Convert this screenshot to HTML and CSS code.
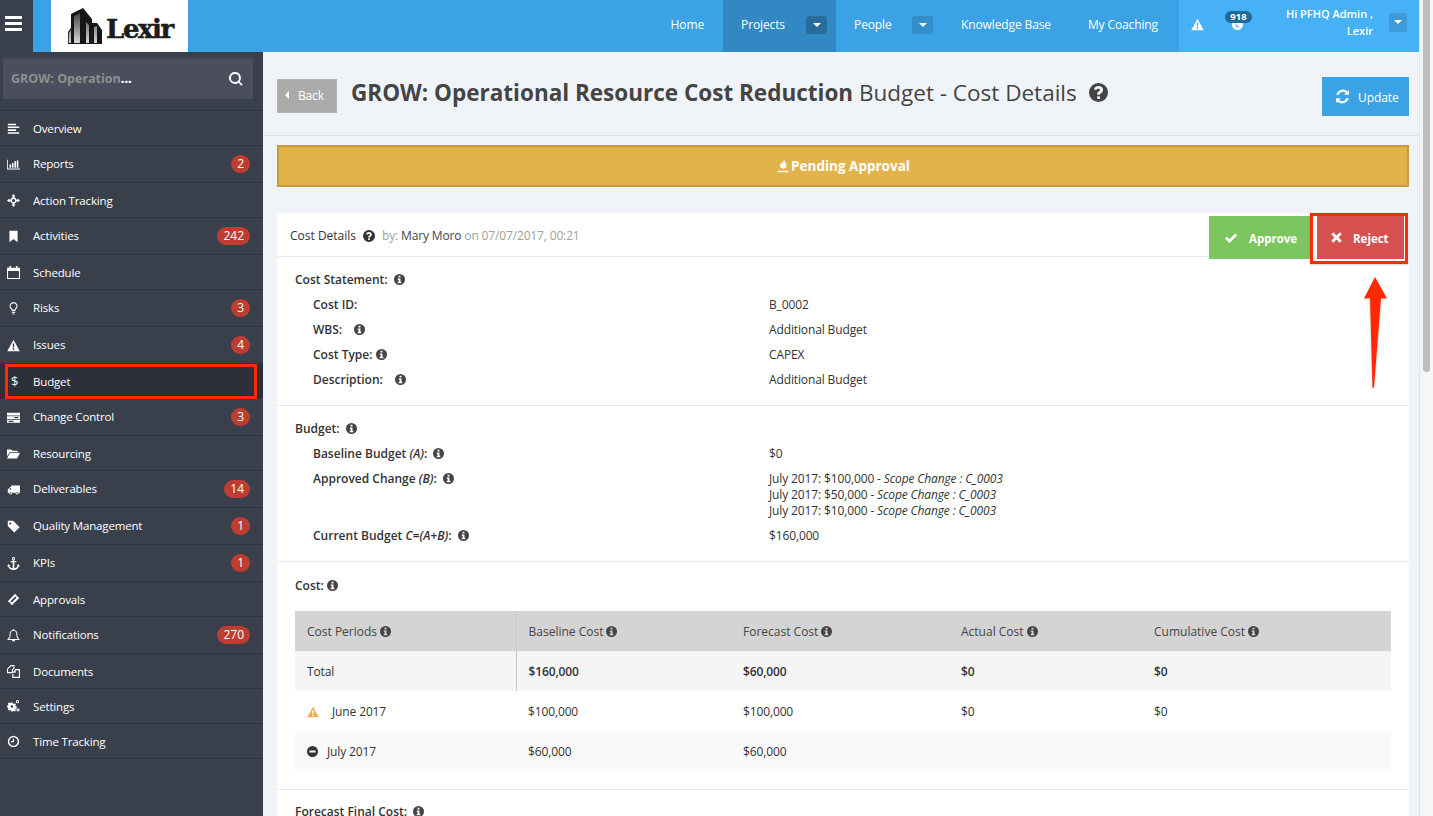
FILE: index.html
```html
<!DOCTYPE html>
<html lang="en">
<head>
<meta charset="utf-8">
<title>Lexir - Budget Cost Details</title>
<link rel="stylesheet" href="styles.css">
</head>
<body>
<svg class="sprite" aria-hidden="true">
  <symbol id="i-overview" viewBox="0 0 16 16"><path d="M1 2h10v2H1zM1 5.500h14v2H1zM1 9h10v2H1zM1 12.500h14v2H1z"/></symbol>
  <symbol id="i-chart" viewBox="0 0 16 16"><path d="M0 2h1v11h15v1H0zM3 8h2v4H3zM6 6h2v6H6zM9 4h2v8H9zM12 3h2v9h-2z"/></symbol>
  <symbol id="i-arrows" viewBox="0 0 16 16"><path fill-rule="evenodd" d="M8 0l2.500 3H9v1.200A4 4 0 0 1 11.800 7H13V5.500l3 2.500-3 2.500V9h-1.200A4 4 0 0 1 9 11.800V13h1.500L8 16l-2.500-3H7v-1.200A4 4 0 0 1 4.200 9H3v1.500L0 8l3-2.500V7h1.200A4 4 0 0 1 7 4.200V3H5.500zM8 6a2 2 0 1 0 0 4 2 2 0 0 0 0-4z"/></symbol>
  <symbol id="i-bookmark" viewBox="0 0 16 16"><path d="M3 1h10v14l-5-4-5 4z"/></symbol>
  <symbol id="i-calendar" viewBox="0 0 16 16"><path fill-rule="evenodd" d="M3 0h2v2h6V0h2v2h3v14H0V2h3zM1.300 6v8.700h13.400V6z"/></symbol>
  <symbol id="i-bulb" viewBox="0 0 16 16"><path fill-rule="evenodd" d="M8 0a5 5 0 0 1 3.200 8.800c-.6.600-1 1.400-1.200 2.200H6c-.2-.8-.6-1.600-1.200-2.200A5 5 0 0 1 8 0zm0 1.400a3.600 3.600 0 0 0-2.300 6.400c.6.500 1 1.100 1.300 1.800h2c.3-.7.7-1.300 1.300-1.800A3.600 3.600 0 0 0 8 1.400zM6 12h4v1.500H6zM6.800 14h2.400v1.500H6.800z"/></symbol>
  <symbol id="i-warn" viewBox="0 0 16 16"><path fill-rule="evenodd" d="M8 1l7.700 14H.3zM7 5.500l.2 5h1.600l.2-5zM7 11.500v2h2v-2z"/></symbol>
  <symbol id="i-server" viewBox="0 0 16 16"><path fill-rule="evenodd" d="M0 2h16v3.500H0zM0 6.500h16V10H0zM0 11h16v3.500H0zM9 7.500v1.500h5V7.500zM2 12v1.500h6V12z"/></symbol>
  <symbol id="i-folder" viewBox="0 0 16 16"><path d="M0 3h5l1.500 1.500H13V6H3.500L0 11.500zM3.800 7H16l-3.500 7H0z"/></symbol>
  <symbol id="i-truck" viewBox="0 0 16 16"><path fill-rule="evenodd" d="M5 3h11v9h-1.500a2 2 0 0 1-4 0H6.500a2 2 0 0 1-4 0H1V8l3-3h1zM4.200 6L2.400 8H5V6zM4.500 11a1 1 0 1 0 0 2 1 1 0 0 0 0-2zM12.500 11a1 1 0 1 0 0 2 1 1 0 0 0 0-2z"/></symbol>
  <symbol id="i-tag" viewBox="0 0 16 16"><path fill-rule="evenodd" d="M1 1h6.500l8 8-6.500 6.500-8-8zM4 3a1.300 1.300 0 1 0 0 2.600A1.300 1.300 0 0 0 4 3z"/></symbol>
  <symbol id="i-anchor" viewBox="0 0 16 16"><path fill-rule="evenodd" d="M8 0a2 2 0 0 1 1 3.700V5h2.500v1.500H9v7.300c2-.2 3.500-1.200 4-2.800l-1.200.3L14 8.500 16 12l-1.400-.6C14 14 11.500 16 8 16s-6-2-6.600-4.600L0 12l2-3.500 2.200 2.800L3 11c.5 1.600 2 2.600 4 2.800V6.500H4.500V5H7V3.700A2 2 0 0 1 8 0zm0 1.200a.8.800 0 1 0 0 1.600.8.800 0 0 0 0-1.600z"/></symbol>
  <symbol id="i-ticket" viewBox="0 0 16 16"><path fill-rule="evenodd" d="M10 1l1.700 1.700a1.400 1.400 0 0 0 1.600 1.600L15 6 6 15l-1.700-1.700a1.400 1.400 0 0 0-1.600-1.600L1 10zM10.200 4.300L4.300 10.200l1.500 1.500 5.900-5.900z"/></symbol>
  <symbol id="i-bell" viewBox="0 0 16 16"><path fill-rule="evenodd" d="M8 0a1 1 0 0 1 1 1.100c2.300.5 3.700 2.300 3.700 4.900 0 3 .8 5 2.800 6.500v1H10a2 2 0 0 1-4 0H.5v-1C2.500 11 3.300 9 3.300 6c0-2.600 1.400-4.400 3.700-4.900A1 1 0 0 1 8 0zm0 2.200C5.900 2.200 4.500 3.700 4.500 6c0 2.700-.6 4.700-2 6.400h11c-1.400-1.700-2-3.700-2-6.400 0-2.300-1.400-3.800-3.500-3.800z"/></symbol>
  <symbol id="i-docs" viewBox="0 0 16 16"><path fill-rule="evenodd" d="M4.500 0h4.700v4.300L7.300 6.200v3.900H0V4.500zM5 1.500L1.400 5v3.700h4.500V5.500L7.800 3.700V1.500zM9.500 5H16v11H6.500v-5H8v3.600h6.600V6.400h-4V9.500H6.500l3-3z"/></symbol>
  <symbol id="i-cogs" viewBox="0 0 16 16"><path fill-rule="evenodd" d="M5 3h2l.3 1.300 1.200.5 1.200-.7 1.300 1.300-.7 1.200.5 1.200 1.200.3v2l-1.200.3-.5 1.200.7 1.200-1.300 1.300-1.200-.7-1.200.5L7 14H5l-.3-1.300-1.200-.5-1.200.7L1 11.600l.7-1.200-.5-1.200L0 9V7l1.200-.3.500-1.200L1 4.300 2.300 3l1.200.7 1.200-.5zM6 6.400a1.600 1.600 0 1 0 0 3.200 1.600 1.600 0 0 0 0-3.200zM13 0a2 2 0 1 1 0 4 2 2 0 0 1 0-4zm0 1.300a.7.700 0 1 0 0 1.400.7.700 0 0 0 0-1.400zM13.500 10a2 2 0 1 1 0 4 2 2 0 0 1 0-4zm0 1.300a.7.700 0 1 0 0 1.400.7.700 0 0 0 0-1.400z"/></symbol>
  <symbol id="i-clock" viewBox="0 0 16 16"><path fill-rule="evenodd" d="M8 1a7 7 0 1 1 0 14A7 7 0 0 1 8 1zm0 1.800a5.200 5.200 0 1 0 0 10.400A5.200 5.200 0 0 0 8 2.800zM7.200 4.500h1.400V8.800H5V7.500h2.200z"/></symbol>
  <symbol id="i-search" viewBox="0 0 16 16"><path fill-rule="evenodd" d="M6.800 0a6.800 6.800 0 0 1 5.400 10.900l3.400 3.300-1.500 1.500-3.300-3.400A6.800 6.800 0 1 1 6.800 0zm0 2.200a4.600 4.600 0 1 0 0 9.200 4.600 4.600 0 0 0 0-9.200z"/></symbol>
  <symbol id="i-refresh" viewBox="0 0 16 16"><path d="M14.800 1v5.200H9.600l2-2A4.700 4.700 0 0 0 3.900 6.400H1.500A7 7 0 0 1 13.200 2.600zM1.200 15V9.800h5.200l-2 2a4.700 4.700 0 0 0 7.700-2.200h2.400A7 7 0 0 1 2.800 13.400z"/></symbol>
  <symbol id="i-info" viewBox="0 0 16 16"><path fill-rule="evenodd" d="M8 0a8 8 0 1 1 0 16A8 8 0 0 1 8 0zM6.600 2.600v2.500h2.800V2.600zM5.400 6.400v1.900h1.300v3.100H5.400v2h5.200v-2H9.400V6.400z"/></symbol>
  <symbol id="i-question" viewBox="0 0 16 16"><path fill-rule="evenodd" d="M8 0a8 8 0 1 1 0 16A8 8 0 0 1 8 0zM6.900 11.100v2.300h2.300v-2.300zM8.100 2.600c-2 0-3.300.9-3.900 2.400l1.700 1.200c.4-.8 1-1.300 2-1.300.8 0 1.300.4 1.300 1 0 .5-.4.900-1.100 1.300-.9.500-1.200 1.300-1.200 2.100v.6h2.300c0-.6.300-.9 1-1.300 1-.6 1.600-1.400 1.600-2.800 0-1.900-1.600-3.200-3.700-3.200z"/></symbol>
  <symbol id="i-check" viewBox="0 0 16 16"><path d="M1 8.600l2.300-2.300 3 3 6.400-6.500L15 5.100l-8.700 8.700z"/></symbol>
  <symbol id="i-cross" viewBox="0 0 16 16"><path d="M1.500 4L4 1.500 8 5.500l4-4L14.500 4l-4 4 4 4-2.500 2.500-4-4-4 4L1.500 12l4-4z"/></symbol>
  <symbol id="i-minus" viewBox="0 0 16 16"><path fill-rule="evenodd" d="M8 0a8 8 0 1 1 0 16A8 8 0 0 1 8 0zM3.500 6.500v3h9v-3z"/></symbol>
  <symbol id="i-shield" viewBox="0 0 16 16"><path fill-rule="evenodd" d="M8 0a8 8 0 1 1 0 16A8 8 0 0 1 8 0zM5 6c-.2 3 1 5 3.500 6.500 1-.6 1.800-1.300 2.300-2.200C8.500 10 6.500 8.500 5 6z"/></symbol>
  <symbol id="i-fire" viewBox="0 0 16 16"><path d="M9 0c.3 2.500 3 4 3 7.500 0 2-1.500 3.500-3.800 3.500S4.500 9.500 4.500 7.500c0-2 2-3 2.500-4.500.4.800.8 1.200 1.200 1.500C8.700 3 8.800 1.500 9 0zM2 13.500h12V15H2z"/></symbol>
</svg>

<div class="app">
  <div class="page">
    <header class="topbar">
      <div class="burger"><span></span><span></span><span></span></div>
      <div class="logo">
        <svg class="logo-mark" viewBox="0 0 34 36">
          <defs><linearGradient id="logo-face" x1="0" y1="0" x2="0" y2="1"><stop offset="0" stop-color="#444"/><stop offset="1" stop-color="#d8d8d8"/></linearGradient></defs>
          <path fill="#161616" d="M3 36V6L15 0l9 11v4l5 0 5 7v14H24v0H3zM0 36V24l3-4v16z"/>
          <path fill="url(#logo-face)" d="M0.800 35V25L3 22v13zM6 35V8l6-3v30zM18 35V14l3 3v18zM26 35V19l3-1v17z"/>
        </svg>
        <span class="logo-text">Lexir</span>
      </div>
      <nav class="nav">
        <a class="nav-item home">Home</a>
        <a class="nav-item projects active">Projects<span class="caret-btn"></span></a>
        <a class="nav-item people">People<span class="caret-btn"></span></a>
        <a class="nav-item kb">Knowledge Base</a>
        <a class="nav-item coaching">My Coaching</a>
      </nav>
      <div class="user-zone">
        <svg class="ic warn-ic"><use href="#i-warn"/></svg>
        <div class="notif">
          <svg class="ic shield-ic"><use href="#i-shield"/></svg>
          <span class="notif-badge">918</span>
        </div>
        <div class="user-name">Hi PFHQ Admin ,<br>Lexir</div>
        <span class="caret-btn user-caret"></span>
      </div>
    </header>

    <div class="body">
      <aside class="sidebar">
        <div class="project-search"><span class="project-name">GROW: Operation<b>...</b></span><svg class="ic search-ic"><use href="#i-search"/></svg></div>
        <ul class="menu">
          <li class="menu-item"><svg class="ic"><use href="#i-overview"/></svg><span class="menu-label">Overview</span></li>
          <li class="menu-item has-badge"><svg class="ic"><use href="#i-chart"/></svg><span class="menu-label">Reports</span><span class="badge">2</span></li>
          <li class="menu-item"><svg class="ic"><use href="#i-arrows"/></svg><span class="menu-label">Action Tracking</span></li>
          <li class="menu-item has-badge"><svg class="ic"><use href="#i-bookmark"/></svg><span class="menu-label">Activities</span><span class="badge">242</span></li>
          <li class="menu-item"><svg class="ic"><use href="#i-calendar"/></svg><span class="menu-label">Schedule</span></li>
          <li class="menu-item has-badge"><svg class="ic"><use href="#i-bulb"/></svg><span class="menu-label">Risks</span><span class="badge">3</span></li>
          <li class="menu-item has-badge"><svg class="ic"><use href="#i-warn"/></svg><span class="menu-label">Issues</span><span class="badge">4</span></li>
          <li class="menu-item current"><span class="dollar">$</span><span class="menu-label">Budget</span></li>
          <li class="menu-item has-badge"><svg class="ic"><use href="#i-server"/></svg><span class="menu-label">Change Control</span><span class="badge">3</span></li>
          <li class="menu-item"><svg class="ic"><use href="#i-folder"/></svg><span class="menu-label">Resourcing</span></li>
          <li class="menu-item has-badge"><svg class="ic"><use href="#i-truck"/></svg><span class="menu-label">Deliverables</span><span class="badge">14</span></li>
          <li class="menu-item has-badge"><svg class="ic"><use href="#i-tag"/></svg><span class="menu-label">Quality Management</span><span class="badge">1</span></li>
          <li class="menu-item has-badge"><svg class="ic"><use href="#i-anchor"/></svg><span class="menu-label">KPIs</span><span class="badge">1</span></li>
          <li class="menu-item"><svg class="ic"><use href="#i-ticket"/></svg><span class="menu-label">Approvals</span></li>
          <li class="menu-item has-badge"><svg class="ic"><use href="#i-bell"/></svg><span class="menu-label">Notifications</span><span class="badge">270</span></li>
          <li class="menu-item"><svg class="ic"><use href="#i-docs"/></svg><span class="menu-label">Documents</span></li>
          <li class="menu-item"><svg class="ic"><use href="#i-cogs"/></svg><span class="menu-label">Settings</span></li>
          <li class="menu-item"><svg class="ic"><use href="#i-clock"/></svg><span class="menu-label">Time Tracking</span></li>
        </ul>
      </aside>

      <main class="main">
        <div class="page-head">
          <a class="back-btn"><span class="caret-left"></span>Back</a>
          <h1 class="title"><b>GROW: Operational Resource Cost Reduction</b> Budget - Cost Details</h1>
          <svg class="ic title-help"><use href="#i-question"/></svg>
          <a class="update-btn"><svg class="ic"><use href="#i-refresh"/></svg>Update</a>
        </div>

        <div class="status-banner"><svg class="ic"><use href="#i-fire"/></svg>Pending Approval</div>

        <section class="card">
          <div class="card-head">
            <span class="card-title">Cost Details</span>
            <svg class="ic help"><use href="#i-question"/></svg>
            <span class="meta">by: <span class="meta-name">Mary Moro</span> on 07/07/2017, 00:21</span>
            <div class="actions">
              <a class="action approve"><svg class="ic"><use href="#i-check"/></svg>Approve</a>
              <a class="action reject"><svg class="ic"><use href="#i-cross"/></svg>Reject</a>
            </div>
          </div>

          <svg class="callout-arrow" viewBox="0 0 25 114"><path fill="#ff2a00" d="M12 1l12 21.500-6-.5-7 89.500H9.500L7 22l-6 .5z"/></svg>

          <div class="section s-statement">
            <div class="row head"><span class="label">Cost Statement:<svg class="ic info"><use href="#i-info"/></svg></span></div>
            <div class="row"><span class="label">Cost ID:</span><span class="value">B_0002</span></div>
            <div class="row"><span class="label">WBS:<svg class="ic info wide"><use href="#i-info"/></svg></span><span class="value">Additional Budget</span></div>
            <div class="row"><span class="label">Cost Type:<svg class="ic info tight"><use href="#i-info"/></svg></span><span class="value">CAPEX</span></div>
            <div class="row"><span class="label">Description:<svg class="ic info wide"><use href="#i-info"/></svg></span><span class="value">Additional Budget</span></div>
          </div>

          <div class="section s-budget">
            <div class="row head"><span class="label">Budget:<svg class="ic info"><use href="#i-info"/></svg></span></div>
            <div class="row"><span class="label">Baseline Budget <i>(A)</i>:<svg class="ic info"><use href="#i-info"/></svg></span><span class="value">$0</span></div>
            <div class="row multi"><span class="label">Approved Change <i>(B)</i>:<svg class="ic info"><use href="#i-info"/></svg></span>
              <span class="value">July 2017: $100,000 - <i>Scope Change : C_0003</i><br>July 2017: $50,000 - <i>Scope Change : C_0003</i><br>July 2017: $10,000 - <i>Scope Change : C_0003</i></span></div>
            <div class="row"><span class="label">Current Budget <i>C=(A+B)</i>:<svg class="ic info"><use href="#i-info"/></svg></span><span class="value">$160,000</span></div>
          </div>

          <div class="section s-cost">
            <div class="row head"><span class="label">Cost:<svg class="ic info tight"><use href="#i-info"/></svg></span></div>
            <table class="cost-table">
              <colgroup><col class="c1"><col class="c2"><col class="c3"><col class="c4"><col class="c5"></colgroup>
              <thead>
                <tr><th class="sep">Cost Periods<svg class="ic info tight"><use href="#i-info"/></svg></th><th>Baseline Cost<svg class="ic info tight"><use href="#i-info"/></svg></th><th>Forecast Cost<svg class="ic info tight"><use href="#i-info"/></svg></th><th>Actual Cost<svg class="ic info tight"><use href="#i-info"/></svg></th><th>Cumulative Cost<svg class="ic info tight"><use href="#i-info"/></svg></th></tr>
              </thead>
              <tbody>
                <tr class="total"><td class="sep">Total</td><td>$160,000</td><td>$60,000</td><td>$0</td><td>$0</td></tr>
                <tr><td><svg class="ic warn-cell"><use href="#i-warn"/></svg>June 2017</td><td>$100,000</td><td>$100,000</td><td>$0</td><td>$0</td></tr>
                <tr class="alt"><td><svg class="ic minus-cell"><use href="#i-minus"/></svg>July 2017</td><td>$60,000</td><td>$60,000</td><td></td><td></td></tr>
              </tbody>
            </table>
          </div>

          <div class="section s-final">
            <div class="row head"><span class="label">Forecast Final Cost:<svg class="ic info"><use href="#i-info"/></svg></span></div>
          </div>
        </section>
      </main>
    </div>
  </div>
  <div class="scrollbar"><div class="thumb"></div></div>
</div>
</body>
</html>
```
FILE: styles.css
```css
* { box-sizing: border-box; }
html, body { margin: 0; height: 816px; overflow: hidden; }
body { font-family: "Open Sans", "Liberation Sans", sans-serif; font-size: 12px; color: #333; background: #f0f4f8; }
.sprite { display: none; }
.ic { width: 14px; height: 14px; fill: currentColor; flex: none; }

.app { display: flex; height: 816px; }
.page { flex: 1; min-width: 0; display: flex; flex-direction: column; }
.scrollbar { width: 14px; background: #f6f6f6; border-left: 1px solid #e4e4e4; padding: 0 3px; }
.thumb { height: 372px; background: #bdbdbd; border-radius: 0 0 4px 4px; }

/* top bar */
.topbar { height: 52px; flex: none; display: flex; background: #3ca2e6; color: #fff; }
.burger { width: 33px; background: #3a3f4c; display: flex; flex-direction: column; gap: 3px; padding: 16px 11px 0 5px; }
.burger span { height: 3px; background: #fff; }
.logo { width: 137px; margin-left: 18px; background: #fff; display: flex; align-items: center; padding-left: 17px; }
.logo-mark { width: 34px; height: 36px; flex: none; }
.logo-text { font-family: "DejaVu Serif", serif; font-weight: 700; font-size: 26px; color: #1c1c1c; margin-left: 4px; letter-spacing: -1.4px; padding-top: 6px; -webkit-text-stroke: .5px #1c1c1c; }
.nav { margin-left: auto; display: flex; }
.nav-item { display: flex; align-items: center; font-size: 12px; letter-spacing: -.12px; color: #fff; padding-bottom: 3px; }
.home { padding-left: 19px; padding-right: 19px; }
.projects { width: 113px; padding-left: 18px; padding-right: 9px; justify-content: space-between; }
.people { width: 107px; padding-left: 18px; padding-right: 10px; justify-content: space-between; }
.kb { padding-left: 18px; padding-right: 18px; }
.coaching { padding-left: 19px; padding-right: 21px; }
.active { background: #3288c2; }
.caret-btn { width: 21px; height: 18px; background: rgba(0, 0, 0, .12); border-radius: 3px; display: flex; align-items: center; justify-content: center; }
.active .caret-btn { background: rgba(0, 0, 0, .2); }
.caret-btn::before { content: ""; border: 4px solid transparent; border-top-color: #fff; border-bottom: 0; }
.user-zone { width: 240px; background: #47b1f5; display: flex; align-items: center; padding-left: 12px; }
.warn-ic { width: 13px; height: 13px; margin-top: -4px; }
.notif { position: relative; width: 12px; height: 12px; margin: -2px 0 0 28px; }
.shield-ic { width: 11px; height: 11px; display: block; }
.notif-badge { position: absolute; left: -7px; top: -8px; width: 27px; height: 12px; border-radius: 6px; background: #1f6a96; font-size: 9.5px; font-weight: 700; line-height: 12px; text-align: center; }
.user-name { width: 129px; text-align: right; font-size: 11px; font-weight: 600; line-height: 17px; margin-top: -8px; }
.user-caret { width: 18px; height: 19px; margin: -8px 0 0 16px; }

/* sidebar */
.body { flex: 1; min-height: 0; display: flex; }
.sidebar { width: 263px; flex: none; background: #3a3f4c; color: #fff; }
.project-search { height: 42px; margin: 5px 10px 11px 3px; background: #4b4f5d; border-top: 2px solid #42464f; display: flex; align-items: center; padding: 0 10px 0 8px; }
.project-name { flex: 1; font-size: 12.5px; font-weight: 700; color: #8f8f8f; padding-bottom: 2px; }
.project-name b { color: #fff; }
.search-ic { color: #fff; }
.menu { list-style: none; margin: 0; padding: 0; border-top: 1px solid #2e323c; }
.menu-item { height: 35px; display: flex; align-items: center; border-bottom: 1px solid #2e323c; padding: 0 13px 0 7px; position: relative; }
.menu-item.has-badge { height: 37px; }
.menu-item.has-badge .menu-label { margin-top: -2px; }
.menu-item .ic { width: 13px; height: 13px; margin-right: 13px; }
.menu-label { flex: 1; font-size: 11.5px; letter-spacing: -.16px; color: #fff; }
.badge { min-width: 18px; height: 18px; padding: 0 6px; border-radius: 9px; background: #bd3e31; font-size: 12px; line-height: 18px; text-align: center; color: #fff; }
.dollar { width: 13px; margin-right: 13px; padding-left: 4px; font-size: 13px; font-weight: 400; }
.current { background: #2d303b; }
.current::after { content: ""; position: absolute; left: 5px; right: 6px; top: 0; bottom: -1px; border: 3px solid #ff2a00; }

/* main */
.main { flex: 1; min-width: 0; overflow: hidden; }
.page-head { height: 84px; display: flex; align-items: flex-start; padding: 25px 10px 0 14px; border-bottom: 1px solid #dce1e5; }
.back-btn { width: 60px; height: 34px; margin-top: 2px; background: #aaa; border: 1px solid #b5b5b5; color: #fff; display: flex; align-items: center; padding: 0 0 2px 7px; font-size: 12px; letter-spacing: -.15px; }
.caret-left { border: 4px solid transparent; border-right-color: #fff; border-left: 0; margin-right: 9px; }
.title { margin: 1px 0 0 14px; font-size: 22.5px; font-weight: 400; line-height: 30px; color: #444; white-space: nowrap; }
.title b { font-weight: 700; }
.title-help { width: 19px; height: 19px; color: #444; margin: 6px 0 0 12px; }
.update-btn { margin-left: auto; width: 87px; height: 39px; background: #3ca2e6; color: #fff; display: flex; align-items: center; padding: 2px 0 0 13px; gap: 8px; font-size: 12px; letter-spacing: -.1px; }
.update-btn .ic { width: 15px; height: 15px; margin-top: -2px; }
.status-banner { height: 42px; margin: 9px 10px 0 14px; background: #e2b34a; border: 2px solid #c69d3e; color: #fff; font-size: 13.5px; font-weight: 700; display: flex; align-items: center; justify-content: center; }
.status-banner .ic { width: 14px; height: 14px; margin-right: 1px; }

.card { position: relative; margin: 26px 10px 0 14px; background: #fff; }
.card-head { height: 44px; display: flex; align-items: center; padding: 2px 0 0 13px; border-bottom: 1px solid #e8ebee; }
.card-title { color: #333; }
.help { width: 12px; height: 12px; color: #333; margin: 0 6px 0 7px; }
.meta { color: #a0a0a0; letter-spacing: -.15px; margin-left: 1px; }
.meta-name { color: #444; }
.actions { margin-left: auto; margin-right: 5px; align-self: flex-start; display: flex; gap: 7px; margin-top: 1px; }
.action { height: 43px; display: flex; align-items: center; color: #fff; font-weight: 700; font-size: 11.5px; padding-top: 2px; position: relative; }
.action .ic { width: 14px; height: 14px; margin: -2px 11px 0 0; }
.approve { width: 101px; padding-left: 15px; background: #7cc55f; }
.reject { width: 87px; padding-left: 13px; background: #d65050; }
.reject .ic { width: 13px; height: 13px; margin-right: 10px; }
.reject::after { content: ""; position: absolute; left: -7px; right: -4px; top: -3px; bottom: -5px; border: 3px solid #ff2a00; box-shadow: 0 1px 2px rgba(0, 0, 0, .2); }
.callout-arrow { position: absolute; right: 21px; top: 63px; width: 25px; height: 114px; filter: drop-shadow(0 1px 1px rgba(0, 0, 0, .25)); }

.section { padding: 0 18px; border-bottom: 1px solid #e8ebee; }
.s-statement { padding-top: 10px; padding-bottom: 13px; }
.s-budget { padding-top: 10px; padding-bottom: 13px; }
.s-cost { padding-top: 11px; padding-bottom: 18px; }
.s-final { padding-top: 9px; border-bottom: 0; }
.row { display: flex; height: 25px; align-items: center; padding-left: 18px; }
.row.head { padding-left: 0; }
.row.multi { height: 57px; align-items: flex-start; padding-top: 4px; }
.row.multi .value { line-height: 16px; margin-top: 1px; }
.label { width: 456px; flex: none; font-weight: 600; color: #333; display: flex; align-items: center; white-space: pre; }
.value { color: #333; letter-spacing: -.13px; }
.info { width: 11px; height: 11px; color: #444; margin-left: 6px; }
.info.wide { margin-left: 12px; }
.info.tight { margin-left: 3px; }

.cost-table { margin-top: 13px; width: 1096px; table-layout: fixed; border-collapse: collapse; }
.c1 { width: 221px; }
.c2 { width: 215px; }
.c3 { width: 218px; }
.c4 { width: 193px; }
.c5 { width: 249px; }
.cost-table th, .cost-table td { height: 40px; padding: 0 12px; text-align: left; vertical-align: middle; font-size: 12px; color: #333; }
.cost-table td { letter-spacing: -.13px; }
.cost-table th { background: #d4d4d4; font-weight: 400; color: #444; white-space: nowrap; }
.cost-table th .ic { vertical-align: -1px; }
.total td { background: #f5f5f5; font-weight: 600; }
.total td:first-child { font-weight: 500; }
.alt td { background: #f9f9f9; }
.sep { border-right: 1px solid #c8c8c8; }
.warn-cell { width: 12px; height: 12px; color: #f0ad4e; margin-right: 13px; vertical-align: -2px; }
.minus-cell { width: 11px; height: 11px; color: #333; margin-right: 9px; vertical-align: -1px; }
```
